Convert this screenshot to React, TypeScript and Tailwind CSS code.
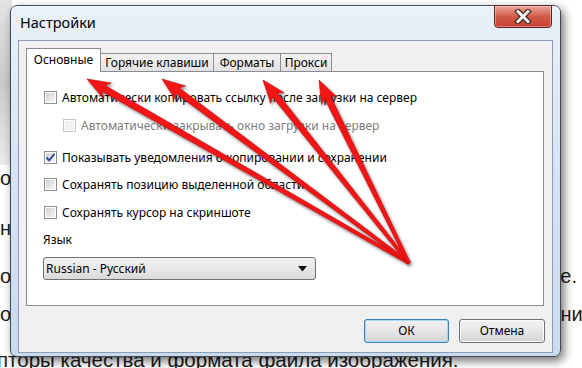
import React from 'react';

// tips of the red annotation arrows, all starting from one point
const arrowBase = { x: 409, y: 263 };
const arrowTips = [
  { x: 87, y: 79 },
  { x: 162, y: 79 },
  { x: 263, y: 80 },
  { x: 319, y: 80 },
];

const arrowPoints = (tip) => {
  const dx = tip.x - arrowBase.x;
  const dy = tip.y - arrowBase.y;
  const len = Math.sqrt(dx * dx + dy * dy);
  const ux = dx / len;
  const uy = dy / len;
  const nx = -uy;
  const ny = ux;
  const headLen = 23;
  const neck = { x: tip.x - ux * headLen, y: tip.y - uy * headLen };
  const notch = { x: tip.x - ux * (headLen - 4), y: tip.y - uy * (headLen - 4) };
  const pts = [
    [arrowBase.x + nx * 1.5, arrowBase.y + ny * 1.5],
    [notch.x + nx * 3.2, notch.y + ny * 3.2],
    [neck.x + nx * 8.5, neck.y + ny * 8.5],
    [tip.x, tip.y],
    [neck.x - nx * 8.5, neck.y - ny * 8.5],
    [notch.x - nx * 3.2, notch.y - ny * 3.2],
    [arrowBase.x - nx * 1.5, arrowBase.y - ny * 1.5],
  ];
  return pts.map((p) => `${p[0].toFixed(1)},${p[1].toFixed(1)}`).join(' ');
};

function Checkbox({ checked = false, disabled = false }) {
  return (
    <span
      className={`flex h-[13px] w-[13px] shrink-0 items-center justify-center border ${
        disabled ? 'border-[#c6c6c6] bg-white' : 'border-[#8e8f8f] bg-white'
      }`}
    >
      <span
        className={`relative flex h-[9px] w-[9px] items-center justify-center ${
          disabled
            ? 'bg-[#f2f2f2]'
            : 'bg-gradient-to-br from-[#cfd1d4] to-[#f7f7f7]'
        }`}
      >
        {checked && (
          <svg width="11" height="11" viewBox="0 0 11 11" className="absolute -left-px -top-px">
            <path d="M1.5 5.5 L4.2 8.3 L9.5 1.8" fill="none" stroke="#2c4a8f" strokeWidth="1.9" />
          </svg>
        )}
      </span>
    </span>
  );
}

function Option({ label, checked = false, disabled = false, className = '' }) {
  return (
    <div className={`flex h-[13px] items-center gap-[5px] ${className}`}>
      <Checkbox checked={checked} disabled={disabled} />
      <span className={`whitespace-nowrap ${disabled ? 'text-[#7d7d7d]' : 'text-black'}`}>{label}</span>
    </div>
  );
}

function App() {
  return (
    <div className="relative h-[368px] w-[582px] overflow-hidden bg-white font-['Liberation_Sans',sans-serif] text-[20px] leading-[20px] text-[#1b1b1b]">
      {/* page behind the dialog */}
      <div className="flex h-full flex-col">
        <div className="absolute left-0 top-0 h-[165px] w-[12px] bg-gradient-to-b from-[#e4e4e4] via-[#c9c9c9] to-[#ececec]" />
        <div className="mt-[168px] whitespace-nowrap">о</div>
        <div className="mt-[30px] whitespace-nowrap">ни</div>
        <div className="mt-[28px] flex justify-between whitespace-nowrap">
          <span>об</span>
          <span className="pr-[5px]">е.</span>
        </div>
        <div className="mt-[18px] flex justify-between whitespace-nowrap">
          <span>о</span>
          <span className="-mr-[14px]">ниж</span>
        </div>
        <div className="-ml-[3px] mt-[26px] whitespace-nowrap text-[20.5px]">пторы качества и формата файла изображения.</div>
      </div>

      {/* dialog window */}
      <div className="absolute left-[10px] top-[5px] flex h-[352px] w-[551px] flex-col rounded-[7px] border border-[#3f4a58] bg-gradient-to-b from-[#e9f0f8] via-[#d6e3f1] to-[#c9dbee] shadow-[3px_4px_10px_rgba(0,0,0,0.55)] font-['Noto_Sans',sans-serif] text-[12px] leading-[18px] text-black">
        <div className="flex h-[34px] items-start justify-between rounded-t-[6px] border-t border-white/70">
          <span className="ml-[9px] mt-[5px] whitespace-nowrap text-[14.5px] leading-[20px] text-black">Настройки</span>
          <div className="-mt-[2px] mr-[8px] flex h-[23px] w-[58px] items-center justify-center rounded-b-[4px] border border-[#5e241d] bg-gradient-to-b from-[#e9a699] via-[#d25a48] to-[#c9402f] shadow-[inset_0_0_0_1px_rgba(255,255,255,0.35)]">
            <svg width="20" height="15" viewBox="0 0 20 15">
              <path d="M5 2.5 L15 12.5 M15 2.5 L5 12.5" stroke="#4a2a26" strokeWidth="5.4" strokeLinecap="square" />
              <path d="M5 2.5 L15 12.5 M15 2.5 L5 12.5" stroke="#f4f4f4" strokeWidth="3" strokeLinecap="square" />
            </svg>
          </div>
        </div>

        {/* client area */}
        <div className="mx-[7px] flex h-[313px] flex-col border border-[#8d9db3] bg-[#f0f0f0] pt-[7px]">
          <div className="ml-[7px] flex h-[23px] items-end whitespace-nowrap">
            <div className="relative z-10 -mb-px flex h-[24px] w-[75px] items-start justify-center border border-b-0 border-[#898c95] bg-white pt-[2px]">
              Основные
            </div>
            <div className="-ml-px flex h-[18px] w-[114px] items-center justify-center border border-b-0 border-[#898c95] bg-gradient-to-b from-[#f4f4f4] to-[#e1e1e1]">
              Горячие клавиши
            </div>
            <div className="-ml-px flex h-[18px] w-[68px] items-center justify-center border border-b-0 border-[#898c95] bg-gradient-to-b from-[#f4f4f4] to-[#e1e1e1]">
              Форматы
            </div>
            <div className="-ml-px flex h-[18px] w-[52px] items-center justify-center border border-b-0 border-[#898c95] bg-gradient-to-b from-[#f4f4f4] to-[#e1e1e1]">
              Прокси
            </div>
          </div>

          <div className="ml-[7px] flex h-[235px] w-[518px] flex-col border border-[#898c95] bg-white pl-[17px] pt-[19px]">
            <Option label="Автоматически копировать ссылку после загрузки на сервер" />
            <Option
              label="Автоматически закрывать окно загрузки на сервер"
              disabled
              className="ml-[19px] mt-[15px]"
            />
            <Option
              label="Показывать уведомления о копировании и сохранении"
              checked
              className="mt-[19px]"
            />
            <Option label="Сохранять позицию выделенной области" className="mt-[14px]" />
            <Option label="Сохранять курсор на скриншоте" className="mt-[15px]" />
            <div className="-ml-px mt-[12px]">Язык</div>
            <div className="-ml-px mt-[8px] flex h-[23px] w-[273px] items-center justify-between rounded-[3px] border border-[#707070] bg-gradient-to-b from-[#f3f3f3] via-[#e8e8e8] to-[#d9d9d9] pl-[2px] pr-[8px]">
              <span>Russian - Русский</span>
              <svg width="9" height="6" viewBox="0 0 9 6">
                <path d="M0 0 H9 L4.5 5.5 Z" fill="#111" />
              </svg>
            </div>
          </div>

          <div className="mt-[13px] flex justify-end gap-[10px] pr-[7px]">
            <button className="flex h-[24px] w-[85px] items-center justify-center rounded-[3px] border border-[#3c7fb1] bg-gradient-to-b from-[#f2f2f2] via-[#e6e6e6] to-[#d3d3d3] shadow-[inset_0_0_0_1px_#a6d8f4]">
              ОК
            </button>
            <button className="flex h-[24px] w-[86px] items-center justify-center rounded-[3px] border border-[#707070] bg-gradient-to-b from-[#f2f2f2] via-[#e6e6e6] to-[#d3d3d3] shadow-[inset_0_0_0_1px_#fcfcfc]">
              Отмена
            </button>
          </div>
        </div>
      </div>

      {/* red annotation arrows */}
      <svg width="582" height="368" viewBox="0 0 582 368" className="pointer-events-none absolute left-0 top-0">
        <defs>
          <filter id="arrowShadow" x="-10%" y="-10%" width="120%" height="120%">
            <feDropShadow dx="1.5" dy="2" stdDeviation="1.4" floodColor="#000" floodOpacity="0.5" />
          </filter>
        </defs>
        <g filter="url(#arrowShadow)">
          {arrowTips.map((tip, i) => (
            <polygon key={i} points={arrowPoints(tip)} fill="#f41414" stroke="#b80808" strokeWidth="0.6" />
          ))}
        </g>
      </svg>
    </div>
  );
}

export default App;
